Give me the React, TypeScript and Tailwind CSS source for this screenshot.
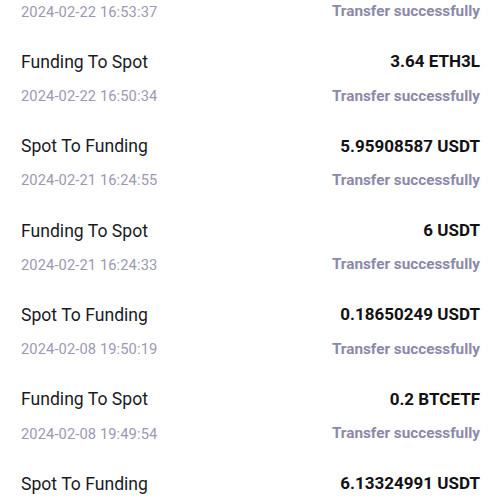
const records = [
  { title: "Spot To Funding", amount: "1.00000000 USDT", time: "2024-02-22 16:53:37" },
  { title: "Funding To Spot", amount: "3.64 ETH3L", time: "2024-02-22 16:50:34" },
  { title: "Spot To Funding", amount: "5.95908587 USDT", time: "2024-02-21 16:24:55" },
  { title: "Funding To Spot", amount: "6 USDT", time: "2024-02-21 16:24:33" },
  { title: "Spot To Funding", amount: "0.18650249 USDT", time: "2024-02-08 19:50:19" },
  { title: "Funding To Spot", amount: "0.2 BTCETF", time: "2024-02-08 19:49:54" },
  { title: "Spot To Funding", amount: "6.13324991 USDT", time: "2024-02-08 19:48:12" },
]

export default function App() {
  return (
    <div className="h-[500px] w-[500px] overflow-hidden bg-white">
      <ul className="-mt-[48.4px] pl-[21px] pr-[20px]">
        {records.map((r, i) => (
          <li key={i} className="pt-[14px] pb-[14.4px]">
            <div className="flex items-center justify-between h-[24px]">
              <span className="text-[17.6px] text-[#1b1b1f] font-['Roboto',sans-serif]">{r.title}</span>
              <span className="text-[17px] font-bold text-[#121214] font-['Roboto',sans-serif]">{r.amount}</span>
            </div>
            <div className="mt-[12px] flex items-center justify-between h-[20px]">
              <span className="text-[14.7px] tracking-[0.1px] text-[#9c99b2] font-['Roboto',sans-serif]">{r.time}</span>
              <span className="text-[15.3px] font-bold text-[#8c89a8] font-['Roboto',sans-serif]">Transfer successfully</span>
            </div>
          </li>
        ))}
      </ul>
    </div>
  )
}
